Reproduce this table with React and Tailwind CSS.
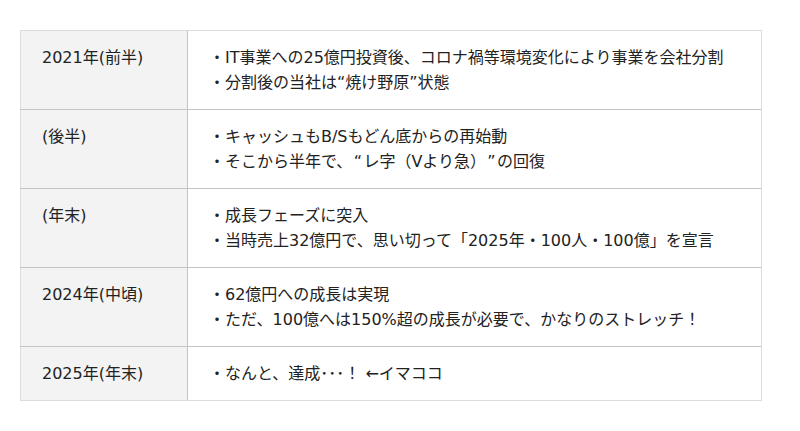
import React from "react";

const rows = [
  { label: "2021年(前半)", lines: ["・IT事業への25億円投資後、コロナ禍等環境変化により事業を会社分割", "・分割後の当社は“焼け野原”状態"] },
  {
    label: "(後半)",
    lines: [
      "・キャッシュもB/Sもどん底からの再始動",
      <>
        ・そこから半年で、<span className="inline-block w-[11px] text-center">“</span>レ字（Vより急）<span className="inline-block w-[11px] text-center">”</span>の回復
      </>,
    ],
  },
  { label: "(年末)", lines: ["・成長フェーズに突入", "・当時売上32億円で、思い切って「2025年・100人・100億」を宣言"] },
  { label: "2024年(中頃)", lines: ["・62億円への成長は実現", "・ただ、100億へは150%超の成長が必要で、かなりのストレッチ！"] },
  { label: "2025年(年末)", lines: ["・なんと、達成･･･！ ←イマココ"] },
];

export default function App() {
  return (
    <div className="w-[800px] h-[431px] bg-white pt-[30px] pl-[20px]" style={{ fontFamily: '"DejaVu Sans", "Noto Sans CJK JP", sans-serif' }}>
      <div className="w-[742px] border-r border-b border-[#dcdcdc] text-[16px] leading-[25px] text-[#222]">
        {rows.map((r, i) => (
          <div key={i} className={`flex border-t ${i === 0 ? "border-[#dcdcdc]" : "border-[#c4c4c4]"}`}>
            <div className="w-[168px] shrink-0 bg-[#f3f3f3] border-l border-[#dcdcdc] border-r border-r-[#c4c4c4] py-[14px] pl-[21px]">
              {r.label}
            </div>
            <div className="flex-1 py-[14px] pl-[21px] whitespace-nowrap">
              {r.lines.map((l, j) => (
                <div key={j}>{l}</div>
              ))}
            </div>
          </div>
        ))}
      </div>
    </div>
  );
}
